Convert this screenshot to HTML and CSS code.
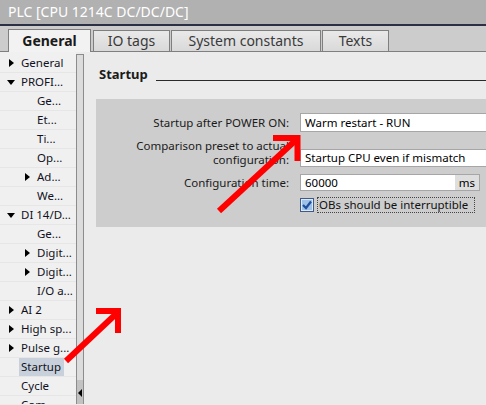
FILE: index.html
```html
<!DOCTYPE html>
<html>
<head>
<meta charset="utf-8">
<link rel="stylesheet" href="styles.css">
</head>
<body>
<div class="title">PLC [CPU 1214C DC/DC/DC]</div>
<div class="tabs">
  <div class="tab active t1">General</div>
  <div class="tab t2">IO tags</div>
  <div class="tab t3">System constants</div>
  <div class="tab t4">Texts</div>
</div>
<div class="main">
  <div class="tree">
    <div class="row l0 closed">General</div>
    <div class="row l0 open">PROFI...</div>
    <div class="row l1">Ge...</div>
    <div class="row l1">Et...</div>
    <div class="row l1">Ti...</div>
    <div class="row l1">Op...</div>
    <div class="row l1 closed">Ad...</div>
    <div class="row l1">We...</div>
    <div class="row l0 open">DI 14/D...</div>
    <div class="row l1">Ge...</div>
    <div class="row l1 closed">Digit...</div>
    <div class="row l1 closed">Digit...</div>
    <div class="row l1">I/O a...</div>
    <div class="row l0 closed">AI 2</div>
    <div class="row l0 closed">High sp...</div>
    <div class="row l0 closed">Pulse g...</div>
    <div class="row l0"><span class="sel">Startup</span></div>
    <div class="row l0">Cycle</div>
    <div class="row l0">Com...</div>
  </div>
  <div class="splitter">
    <div class="split-track"></div>
    <div class="split-btn"></div>
  </div>
  <div class="pane">
    <div class="heading"><span class="htext">Startup</span><div class="rule"></div></div>
    <div class="box">
      <div class="frow r1">
        <div class="label">Startup after POWER ON:</div>
        <div class="field">Warm restart - RUN</div>
      </div>
      <div class="frow r2">
        <div class="label">Comparison preset to actual<br>configuration:</div>
        <div class="field f2">Startup CPU even if mismatch</div>
      </div>
      <div class="frow r3">
        <div class="label">Configuration time:</div>
        <div class="field f3"><span class="val">60000</span><span class="unit">ms</span></div>
      </div>
      <div class="frow r4">
        <div class="label"></div>
        <div class="check"><svg width="14" height="14" viewBox="0 0 14 14"><rect x="0.5" y="0.5" width="13" height="13" fill="#dfe9f5" stroke="#3d5a8a"/><rect x="2" y="2" width="10" height="10" fill="#9fc1e6"/><path d="M3 7 L6 10 L11 3.5" fill="none" stroke="#1f4e9e" stroke-width="2.2"/></svg></div>
        <div class="cblabel">OBs should be interruptible</div>
      </div>
    </div>
  </div>
</div>
<svg class="arrows" width="486" height="405" viewBox="0 0 486 405">
  <g fill="none" stroke="#ff0000" stroke-width="6">
    <line x1="219" y1="211" x2="297" y2="139"/>
    <polyline points="273,138 297.5,138 297.5,161"/>
    <line x1="66" y1="361" x2="117" y2="313"/>
    <polyline points="96,311 118,311 118,333"/>
  </g>
</svg>
</body>
</html>
```

FILE: styles.css
```css
* { box-sizing: border-box; }
html, body {
  margin: 0;
  padding: 0;
}
body {
  width: 486px;
  height: 405px;
  overflow: hidden;
  position: relative;
  font-family: "Noto Sans", "Open Sans", sans-serif;
  font-size: 11.5px;
  color: #1a1a1a;
  background: #ebebeb;
}
.title {
  height: 26px;
  line-height: 24px;
  background: #b1b1b1;
  color: #ffffff;
  font-size: 14px;
  padding-left: 8px;
  border-bottom: 2px solid #2b3047;
  white-space: nowrap;
}
.tabs {
  height: 26px;
  background: #cccccc;
  border-bottom: 1px solid #7f7f7f;
  display: flex;
  align-items: flex-end;
  padding-left: 8px;
}
.tab {
  height: 21px;
  border: 1px solid #7f7f7f;
  border-bottom: none;
  background: linear-gradient(#e9e9e9, #d9d9d9);
  color: #3a3a3a;
  font-size: 14px;
  line-height: 19px;
  text-align: center;
  white-space: nowrap;
}
.tab.active {
  height: 23px;
  margin-bottom: -1px;
  background: #f2f2f2;
  color: #1a1a1a;
  font-weight: bold;
  line-height: 22px;
}
.t1 { width: 83px; margin-right: 2px; }
.t2 { width: 77px; margin-right: 1px; }
.t3 { width: 150px; margin-right: 1px; }
.t4 { width: 67px; }
.main {
  display: flex;
  height: 352px;
}
.tree {
  width: 76px;
  background: #f0f0f0;
  padding-top: 2px;
  overflow: hidden;
  flex: none;
}
.row {
  position: relative;
  height: 19px;
  line-height: 18px;
  border-bottom: 1px solid #e6e6e6;
  white-space: nowrap;
  overflow: hidden;
  color: #111122;
}
.l0 { padding-left: 21px; }
.l1 { padding-left: 37px; }
.closed::before, .open::before {
  content: "";
  position: absolute;
  width: 0;
  height: 0;
}
.closed::before {
  top: 5px;
  border-left: 5px solid #000;
  border-top: 4px solid transparent;
  border-bottom: 4px solid transparent;
}
.l0.closed::before { left: 9px; }
.l1.closed::before { left: 25px; }
.open::before {
  top: 7px;
  left: 7px;
  border-top: 5px solid #000;
  border-left: 4px solid transparent;
  border-right: 4px solid transparent;
}
.sel {
  display: inline-block;
  background: #c8d1db;
  margin-left: -2px;
  padding: 0 3px 0 2px;
  height: 18px;
}
.splitter {
  width: 8px;
  margin-top: 2px;
  border: 1px solid #8c8c8c;
  border-bottom: none;
  display: flex;
  flex-direction: column;
  flex: none;
}
.split-track {
  flex: 1;
  background: #dcdcdc;
}
.split-btn {
  height: 24px;
  background: #c2c2c2;
  position: relative;
}
.split-btn::before {
  content: "";
  position: absolute;
  left: 1px;
  top: 9px;
  border-right: 4px solid #000;
  border-top: 4px solid transparent;
  border-bottom: 4px solid transparent;
}
.pane {
  flex: 1;
  padding-left: 12px;
  overflow: hidden;
}
.heading {
  display: flex;
  align-items: flex-end;
  padding-top: 13px;
  padding-left: 3px;
}
.htext {
  font-weight: bold;
  font-size: 13px;
  line-height: 18px;
  white-space: nowrap;
}
.rule {
  flex: 1;
  height: 1px;
  background: #2a2a2a;
  margin-left: 8px;
  margin-bottom: 2px;
}
.box {
  margin-top: 16px;
  height: 128px;
  background: #cdcdcd;
  padding-top: 14px;
}
.frow {
  display: flex;
  align-items: flex-end;
  white-space: nowrap;
}
.label {
  width: 193px;
  flex: none;
  text-align: right;
  margin-right: 11px;
  line-height: 14px;
}
.r1 .label, .r3 .label { align-self: center; }
.field {
  flex: none;
  width: 200px;
  height: 19px;
  background: #ffffff;
  border: 1px solid #a6a6a6;
  padding-left: 4px;
  line-height: 17px;
  color: #000;
}
.r2 { margin-top: 7px; }
.f2 { height: 18px; line-height: 16px; }
.r3 { margin-top: 7px; }
.f3 {
  width: 180px;
  height: 17px;
  line-height: 15px;
  display: flex;
  padding-left: 0;
}
.val { flex: 1; padding-left: 4px; }
.unit {
  width: 24px;
  background: #dedede;
  text-align: center;
}
.r4 { margin-top: 6px; align-items: center; }
.check {
  width: 14px;
  height: 14px;
  flex: none;
}
.check svg { display: block; }
.cblabel {
  margin-left: 3px;
  height: 16px;
  line-height: 14px;
  border: 1px dotted #444;
  padding: 0 6px 0 1px;
  color: #111;
}
.arrows {
  position: absolute;
  left: 0;
  top: 0;
  pointer-events: none;
}
```
